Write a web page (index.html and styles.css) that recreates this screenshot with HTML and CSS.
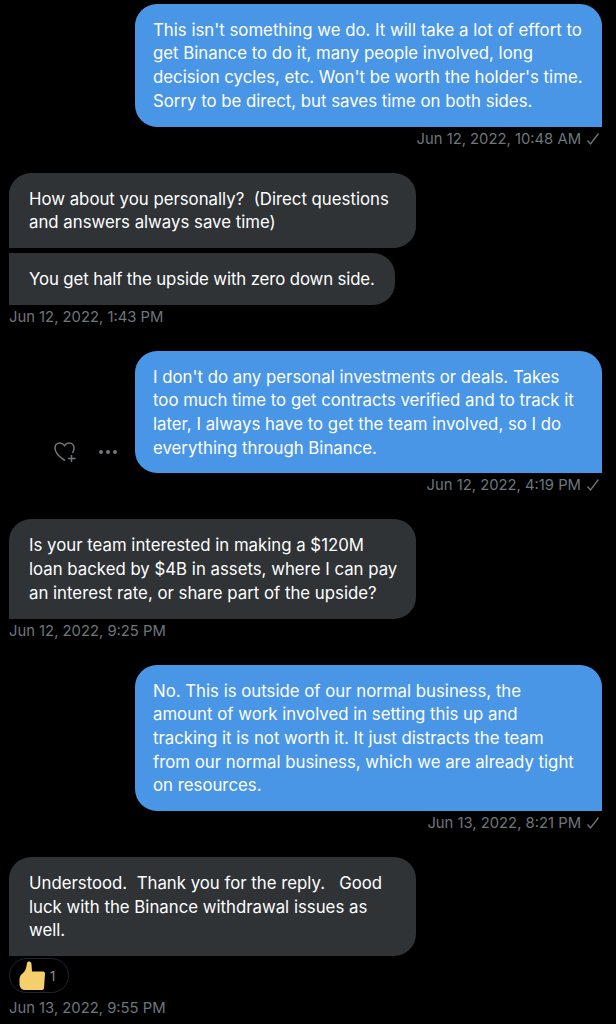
FILE: index.html
```html
<!DOCTYPE html>
<html lang="en">
<head>
  <meta charset="UTF-8" />
  <title>Messages</title>
  <link rel="stylesheet" href="styles.css">
</head>
<body>
  <div class="thread">
    <div class="msg sent">
      <div class="bubble">This isn't something we do. It will take a lot of effort to get Binance to do it, many people involved, long decision cycles, etc. Won't be worth the holder's time. Sorry to be direct, but saves time on both sides.</div>
      <div class="meta">Jun 12, 2022, 10:48 AM
        <svg class="check" viewBox="0 0 14 14"><path d="M1.5 8.5 L4.5 12 L12.5 1.5" /></svg>
      </div>
    </div>

    <div class="msg received">
      <div class="bubble wide">How about you personally?&nbsp; (Direct questions and answers always save time)</div>
      <div class="bubble next">You get half the upside with zero down side.</div>
      <div class="meta">Jun 12, 2022, 1:43 PM</div>
    </div>

    <div class="msg sent">
      <div class="row">
        <div class="actions">
          <svg class="heart" viewBox="0 0 24 22"><path d="M12 19.5 C8 17 2 12.5 2 7 C2 4 4.2 2 6.8 2 C8.8 2 10.4 3 11.5 4.7 C12.6 3 14.2 2 16.2 2 C18.8 2 21 4 21 7 C21 9 20.4 10.5 19.6 12" /><path d="M18.5 14 V21 M15 17.5 H22.5" /></svg>
          <span class="dots"><i></i><i></i><i></i></span>
        </div>
        <div class="bubble">I don't do any personal investments or deals. Takes too much time to get contracts verified and to track it later, I always have to get the team involved, so I do everything through Binance.</div>
      </div>
      <div class="meta">Jun 12, 2022, 4:19 PM
        <svg class="check" viewBox="0 0 14 14"><path d="M1.5 8.5 L4.5 12 L12.5 1.5" /></svg>
      </div>
    </div>

    <div class="msg received">
      <div class="bubble wide">Is your team interested in making a $120M loan backed by $4B in assets, where I can pay an interest rate, or share part of the upside?</div>
      <div class="meta">Jun 12, 2022, 9:25 PM</div>
    </div>

    <div class="msg sent">
      <div class="bubble">No. This is outside of our normal business, the amount of work involved in setting this up and tracking it is not worth it. It just distracts the team from our normal business, which we are already tight on resources.</div>
      <div class="meta">Jun 13, 2022, 8:21 PM
        <svg class="check" viewBox="0 0 14 14"><path d="M1.5 8.5 L4.5 12 L12.5 1.5" /></svg>
      </div>
    </div>

    <div class="msg received">
      <div class="bubble wide">Understood.&nbsp; Thank you for the reply. &nbsp; Good luck with the Binance withdrawal issues as well.</div>
      <div class="reaction">
        <svg class="thumb" viewBox="0 0 26 29"><path d="M8 2 C9 0 12 0 12.5 3 L13 10.5 L24 10.5 C25.5 10.5 26 11.5 26 13 L25 27 C25 28.5 24 29 22 29 L6 29 C3 29 1 27 0.5 24 L0.5 18 C1 14 3 13 5 11 C7 9 7.5 5 8 2 Z" /></svg>
        <span class="count">1</span>
      </div>
      <div class="meta after-reaction">Jun 13, 2022, 9:55 PM</div>
    </div>
  </div>
</body>
</html>
```

FILE: styles.css
```css
* { box-sizing: border-box; }
body {
  margin: 0;
  background: #000;
  font-family: Inter, "Noto Sans", sans-serif;
  height: 1024px;
  overflow: hidden;
}
.thread {
  display: flex;
  flex-direction: column;
  gap: 24px;
  padding: 3.7px 14px 0 9px;
}
.msg {
  display: flex;
  flex-direction: column;
}
.bubble {
  font-size: 16.8px;
  line-height: 23.7px;
  color: #fff;
  padding: 15px 16px 13px 20px;
  border-radius: 22px;
}
.sent {
  align-items: flex-end;
}
.sent .bubble {
  width: 467px;
  padding: 15px 18px 13px;
  background: #4a96e6;
  border-bottom-right-radius: 0;
}
.received {
  align-items: flex-start;
}
.received .bubble {
  background: #2f3336;
  border-bottom-left-radius: 0;
}
.received .wide {
  width: 407px;
}
.received .next {
  margin-top: 5px;
  padding-right: 20px;
  letter-spacing: -0.12px;
  border-top-left-radius: 0;
}
.row {
  display: flex;
  align-items: flex-end;
}
.actions {
  display: flex;
  align-items: center;
  gap: 22px;
  padding-bottom: 10px;
  margin-right: 18px;
}
.heart {
  width: 24px;
  height: 22px;
  fill: none;
  stroke: #71767b;
  stroke-width: 1.5;
}
.dots {
  display: flex;
  gap: 3px;
}
.dots i {
  width: 4px;
  height: 4px;
  border-radius: 50%;
  background: #71767b;
}
.meta {
  font-size: 14.8px;
  line-height: 20px;
  color: #6e767d;
  display: flex;
  align-items: center;
  gap: 5px;
  margin-top: 2px;
}
.sent .meta {
  padding-right: 2px;
}
.check {
  width: 14px;
  height: 14px;
  fill: none;
  stroke: #71767b;
  stroke-width: 1.3;
}
.reaction {
  display: flex;
  align-items: center;
  gap: 5px;
  width: 60px;
  height: 35px;
  padding-left: 9px;
  border: 1px solid #1d2530;
  border-radius: 18px;
  margin-top: 2px;
}
.thumb {
  width: 26px;
  height: 29px;
  fill: #f5cf6b;
}
.count {
  font-size: 13px;
  color: #8a8f94;
}
.after-reaction {
  margin-top: 5px;
}
```
